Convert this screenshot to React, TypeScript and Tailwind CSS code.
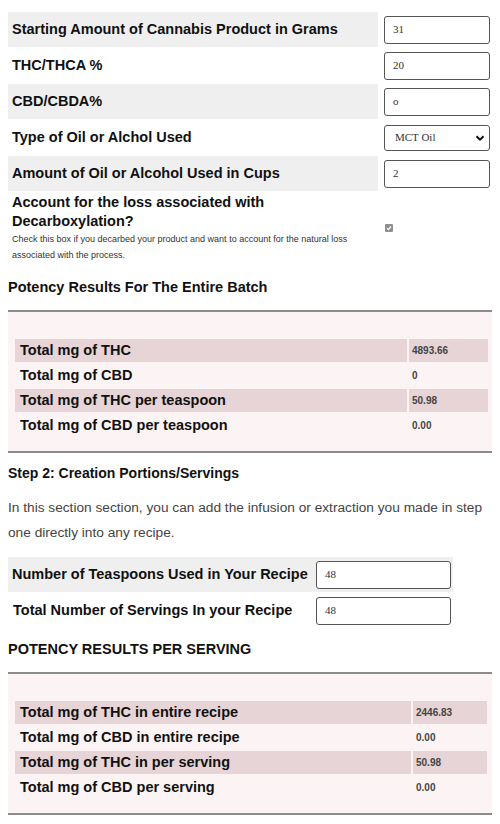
import React from "react";

const topRows = [
  { label: "Starting Amount of Cannabis Product in Grams", value: "31", gray: true },
  { label: "THC/THCA %", value: "20", gray: false },
  { label: "CBD/CBDA%", value: "o", gray: true },
];

function Input({ value, w = "w-[106px]" }: { value: string; w?: string }) {
  return (
    <div
      className={`${w} h-[28px] border border-[#555] rounded-[3px] bg-white flex items-center pl-[8px] text-[11px] text-[#333] font-['Liberation_Serif',serif]`}
    >
      {value}
    </div>
  );
}

function ResultTable({ rows, valueW }: { rows: [string, string][]; valueW: string }) {
  return (
    <div className="flex flex-col gap-[2px]">
      {rows.map(([l, v], i) => (
        <div key={i} className="flex gap-[2px] h-[23px]">
          <div
            className={`flex-1 flex items-center pl-[5px] font-bold text-[14.5px] text-[#111] ${
              i % 2 === 0 ? "bg-[#e6d4d6]" : ""
            }`}
          >
            {l}
          </div>
          <div
            className={`${valueW} flex items-center pl-[3px] font-bold text-[10px] text-[#444] ${
              i % 2 === 0 ? "bg-[#e6d4d6]" : ""
            }`}
          >
            {v}
          </div>
        </div>
      ))}
    </div>
  );
}

export default function App() {
  return (
    <div className="w-[500px] min-h-[824px] bg-white px-2 font-['Liberation_Sans',Arial,sans-serif] text-[#111]">
      <div className="pt-3 flex flex-col gap-px">
        {topRows.map((r) => (
          <div key={r.label} className="flex h-[35px]">
            <div
              className={`w-[370px] flex items-center pl-[4px] font-bold text-[14.5px] ${
                r.gray ? "bg-[#efefef]" : ""
              }`}
            >
              {r.label}
            </div>
            <div className="flex-1 flex items-center pl-[6px]">
              <Input value={r.value} />
            </div>
          </div>
        ))}
        <div className="flex h-[35px]">
          <div className="w-[370px] flex items-center pl-[4px] font-bold text-[14.5px]">
            Type of Oil or Alchol Used
          </div>
          <div className="flex-1 flex items-center pl-[6px]">
            <div className="w-[106px] h-[26px] border border-[#555] rounded-[3px] bg-white flex items-center justify-between pl-[10px] pr-[4px] text-[11px] text-[#333] font-['Liberation_Serif',serif]">
              <span>MCT Oil</span>
              <svg width="10" height="10" viewBox="0 0 10 10">
                <path d="M1.5 3.2 L5 6.7 L8.5 3.2" fill="none" stroke="#111" strokeWidth="2" />
              </svg>
            </div>
          </div>
        </div>
        <div className="flex h-[35px]">
          <div className="w-[370px] flex items-center pl-[4px] font-bold text-[14.5px] bg-[#efefef]">
            Amount of Oil or Alcohol Used in Cups
          </div>
          <div className="flex-1 flex items-center pl-[6px]">
            <Input value="2" />
          </div>
        </div>
        <div className="flex pt-[1px]">
          <div className="w-[370px] pl-[4px]">
            <div className="font-bold text-[14.5px] leading-[19px]">
              Account for the loss associated with Decarboxylation?
            </div>
            <div className="text-[9px] leading-[16px] text-[#333]">
              Check this box if you decarbed your product and want to account for the natural loss associated with the process.
            </div>
          </div>
          <div className="flex-1 flex items-center pl-[7px]">
            <span className="w-[8px] h-[8px] rounded-[1px] bg-[#8f8f8f] flex items-center justify-center">
              <svg width="6" height="6" viewBox="0 0 6 6">
                <path d="M1 3.2 L2.4 4.6 L5 1.5" fill="none" stroke="#fff" strokeWidth="1.2" />
              </svg>
            </span>
          </div>
        </div>
      </div>

      <div className="mt-[14px] font-bold text-[14.5px] leading-[20px]">
        Potency Results For The Entire Batch
      </div>
      <div className="mt-[13px] border-t-2 border-[#8c8c8c]" />
      <div className="bg-[#fcf4f4] pt-[27px] pb-[14px] pl-[7px] pr-[4px]">
        <ResultTable
          valueW="w-[79px]"
          rows={[
            ["Total mg of THC", "4893.66"],
            ["Total mg of CBD", "0"],
            ["Total mg of THC per teaspoon", "50.98"],
            ["Total mg of CBD per teaspoon", "0.00"],
          ]}
        />
      </div>
      <div className="border-t-2 border-[#8c8c8c]" />

      <div className="mt-[10px] font-bold text-[14px] leading-[20px]">
        Step 2: Creation Portions/Servings
      </div>
      <p className="mt-[12px] text-[13.7px] leading-[25px] text-[#444]">
        In this section section, you can add the infusion or extraction you made in step one directly into any recipe.
      </p>
      <div className="mt-[12px] flex flex-col gap-px w-[445px]">
        <div className="flex h-[35px] bg-[#efefef]">
          <div className="w-[304px] flex items-center pl-[4px] font-bold text-[14.5px]">
            Number of Teaspoons Used in Your Recipe
          </div>
          <div className="flex-1 flex items-center pl-[4px]">
            <Input value="48" w="w-[135px]" />
          </div>
        </div>
        <div className="flex h-[35px]">
          <div className="w-[304px] flex items-center pl-[5px] font-bold text-[14.5px]">
            Total Number of Servings In your Recipe
          </div>
          <div className="flex-1 flex items-center pl-[4px]">
            <Input value="48" w="w-[135px]" />
          </div>
        </div>
      </div>

      <div className="mt-[11px] font-bold text-[14.5px] leading-[20px]">
        POTENCY RESULTS PER SERVING
      </div>
      <div className="mt-[13px] border-t-2 border-[#8c8c8c]" />
      <div className="bg-[#fcf4f4] pt-[27px] pb-[14px] pl-[7px] pr-[5px]">
        <ResultTable
          valueW="w-[74px]"
          rows={[
            ["Total mg of THC in entire recipe", "2446.83"],
            ["Total mg of CBD in entire recipe", "0.00"],
            ["Total mg of THC in per serving", "50.98"],
            ["Total mg of CBD per serving", "0.00"],
          ]}
        />
      </div>
      <div className="border-t-2 border-[#8c8c8c]" />
    </div>
  );
}
